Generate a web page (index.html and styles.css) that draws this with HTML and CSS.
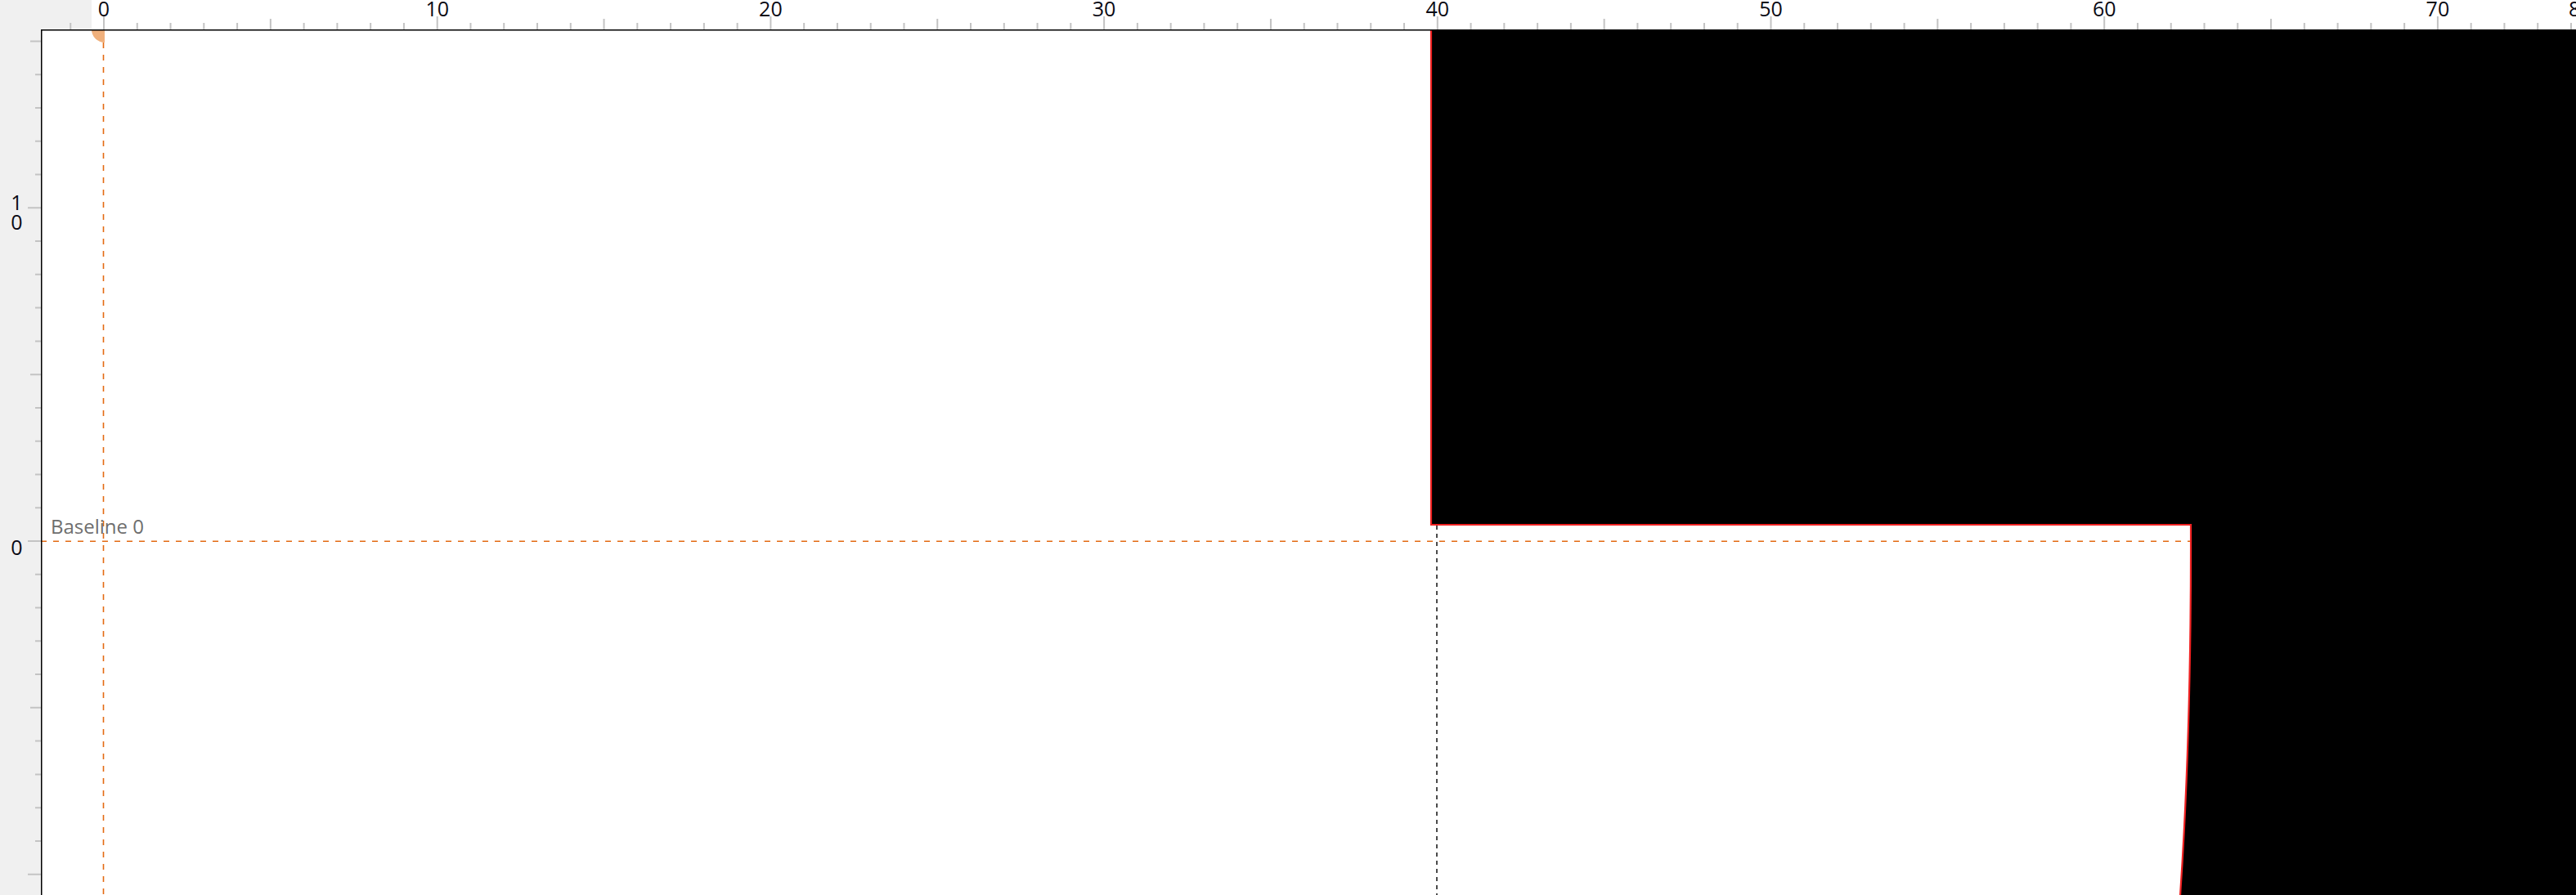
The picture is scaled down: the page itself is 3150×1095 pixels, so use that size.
FILE: index.html
```html
<!DOCTYPE html>
<html lang="en">
<head>
<meta charset="utf-8">
<title>Glyph editor</title>
<link rel="stylesheet" href="styles.css">
</head>
<body>
<div class="editor">
  <div class="corner"></div>

  <svg class="ruler-top" width="3100" height="36" viewBox="50 0 3100 36">
    <rect class="ruler-top-gray" x="50" y="0" width="62" height="36"/>
    <rect class="ruler-top-white" x="112" y="0" width="3038" height="36"/>
    <path class="tick" d="M86.23 28V36M167.77 28V36M208.54 28V36M249.31 28V36M290.08 28V36M371.62 28V36M412.39 28V36M453.16 28V36M493.93 28V36M575.47 28V36M616.24 28V36M657.01 28V36M697.78 28V36M779.32 28V36M820.09 28V36M860.86 28V36M901.63 28V36M983.17 28V36M1023.94 28V36M1064.71 28V36M1105.48 28V36M1187.02 28V36M1227.79 28V36M1268.56 28V36M1309.33 28V36M1390.87 28V36M1431.64 28V36M1472.41 28V36M1513.18 28V36M1594.72 28V36M1635.49 28V36M1676.26 28V36M1717.03 28V36M1798.57 28V36M1839.34 28V36M1880.11 28V36M1920.88 28V36M2002.42 28V36M2043.19 28V36M2083.96 28V36M2124.73 28V36M2206.27 28V36M2247.04 28V36M2287.81 28V36M2328.58 28V36M2410.12 28V36M2450.89 28V36M2491.66 28V36M2532.43 28V36M2613.97 28V36M2654.74 28V36M2695.51 28V36M2736.28 28V36M2817.82 28V36M2858.59 28V36M2899.36 28V36M2940.13 28V36M3021.67 28V36M3062.44 28V36M3103.21 28V36M3143.98 28V36"/>
    <path class="tick" d="M330.85 23V36M738.55 23V36M1146.25 23V36M1553.95 23V36M1961.65 23V36M2369.35 23V36M2777.05 23V36"/>
    <path class="tick" d="M127 20V36M534.7 20V36M942.4 20V36M1350.1 20V36M1757.8 20V36M2165.5 20V36M2573.2 20V36M2980.9 20V36"/>
    <g class="ruler-label top-label">
      <text x="127" y="20">0</text>
      <text x="534.7" y="20">10</text>
      <text x="942.4" y="20">20</text>
      <text x="1350.1" y="20">30</text>
      <text x="1757.8" y="20">40</text>
      <text x="2165.5" y="20">50</text>
      <text x="2573.2" y="20">60</text>
      <text x="2980.9" y="20">70</text>
      <text class="edge-label" x="3141" y="20">80</text>
    </g>
  </svg>

  <svg class="ruler-left" width="50" height="1059" viewBox="0 36 50 1059">
    <path class="tick" d="M43 91.22H50M43 131.99H50M43 172.76H50M43 213.53H50M43 295.07H50M43 335.84H50M43 376.61H50M43 417.38H50M43 498.92H50M43 539.69H50M43 580.46H50M43 621.23H50M43 702.77H50M43 743.54H50M43 784.31H50M43 825.08H50M43 906.62H50M43 947.39H50M43 988.16H50M43 1028.93H50"/>
    <path class="tick" d="M37 50.45H50M37 458.15H50M37 865.85H50"/>
    <path class="tick" d="M34 254.3H50M34 662H50M34 1069.7H50"/>
    <g class="ruler-label left-label">
      <text x="20.5" y="257">1</text>
      <text x="20.5" y="281">0</text>
      <text x="20.5" y="679">0</text>
    </g>
  </svg>

  <svg class="canvas" width="3100" height="1059" viewBox="50 36 3100 1059">
    <rect class="canvas-bg" x="50" y="36" width="3100" height="1059"/>
    <path class="guide-origin" d="M126.5 52V1095"/>
    <path class="origin-marker" d="M128 36H112A16 16 0 0 0 128 52Z"/>
    <path class="guide-baseline" d="M50 662.3H3150"/>
    <text class="baseline-label" x="62" y="653">Baseline 0</text>
    <path class="glyph" d="M1750 20V642H2679C2679.5 800 2676.5 950 2665 1110H3170V20Z"/>
    <path class="guide-advance" d="M1757 643V1095"/>
    <path class="ruler-axis" d="M50 36.75H3150M50.75 36V1095"/>
  </svg>
</div>
</body>
</html>
```

FILE: styles.css
```css
html, body {
  margin: 0;
  padding: 0;
  background: #f0f0f0;
}

body {
  width: 3150px;
  height: 1095px;
  overflow: hidden;
  font-family: "Open Sans", "Noto Sans", "DejaVu Sans", sans-serif;
}

.editor {
  display: grid;
  grid-template-columns: 50px 3100px;
  grid-template-rows: 36px 1059px;
  width: 3150px;
  height: 1095px;
  overflow: hidden;
}

.corner {
  background: #f0f0f0;
}

.ruler-top,
.ruler-left,
.canvas {
  display: block;
  overflow: hidden;
}

.ruler-top-gray {
  fill: #f0f0f0;
}

.ruler-top-white {
  fill: #ffffff;
}

.ruler-left {
  background: #f0f0f0;
}

.tick {
  fill: none;
  stroke: #c3c3c3;
  stroke-width: 2;
}

.ruler-label {
  font-family: "Open Sans", "Noto Sans", sans-serif;
  font-size: 25px;
  fill: #0a0a14;
  text-anchor: middle;
}

.edge-label {
  text-anchor: start;
}

.canvas-bg {
  fill: #ffffff;
}

.guide-origin {
  fill: none;
  stroke: #e36a12;
  stroke-width: 1.6;
  stroke-dasharray: 7 8;
}

.origin-marker {
  fill: #f0b07c;
}

.guide-baseline {
  fill: none;
  stroke: #e36a12;
  stroke-width: 1.6;
  stroke-dasharray: 7 8;
}

.baseline-label {
  font-family: "Open Sans", "Noto Sans", sans-serif;
  font-size: 24px;
  fill: #6e6e6e;
}

.glyph {
  fill: #000000;
  stroke: #ee2222;
  stroke-width: 2.2;
}

.guide-advance {
  fill: none;
  stroke: #000000;
  stroke-width: 1.4;
  stroke-dasharray: 5 5;
}

.ruler-axis {
  fill: none;
  stroke: #000000;
  stroke-width: 1.5;
}
```
